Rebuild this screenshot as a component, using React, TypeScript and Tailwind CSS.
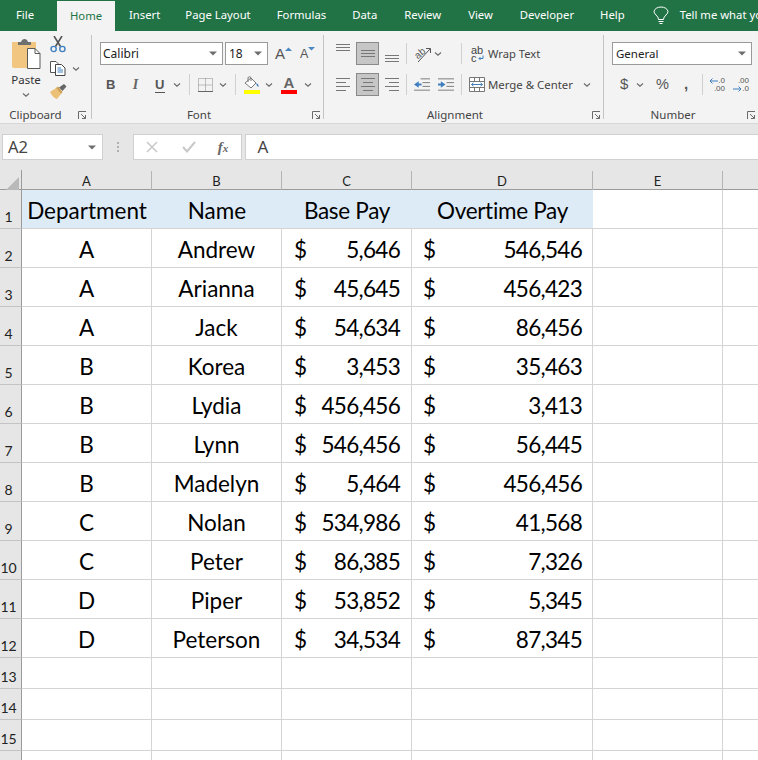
import React from "react";

const UI = "font-['Noto_Sans',sans-serif]";
const CELL = "font-['Lato',sans-serif]";

function Chev({ w = 12, c = "#6a6a6a" }: { w?: number; c?: string }) {
  return (
    <svg width={w} height="6" viewBox={`0 0 ${w} 6`} className="shrink-0">
      <path d={`M${w / 2 - 3} 1.5 L${w / 2} 4.2 L${w / 2 + 3} 1.5`} fill="none" stroke={c} strokeWidth="1.1" />
    </svg>
  );
}
function Tri() {
  return (
    <svg width="8" height="5" viewBox="0 0 8 5" className="shrink-0">
      <path d="M0 0.5H8L4 4.5Z" fill="#6e6e6e" />
    </svg>
  );
}
function Launcher() {
  return (
    <svg width="9" height="9" viewBox="0 0 9 9" className="shrink-0">
      <path d="M0.5 8V0.5H8M3 3L7.5 7.5M7.5 4V7.5H4" fill="none" stroke="#6a6a6a" strokeWidth="1" />
    </svg>
  );
}
function VSep() {
  return <div className="w-px h-[21px] bg-[#d0d0d0] shrink-0" />;
}
function GroupSep() {
  return <div className="w-px h-[84px] mt-[4px] bg-[#c4c4c4] shrink-0" />;
}
function GroupLabel({ text, pr, launcherGap }: { text: string; pr: number; launcherGap: number }) {
  return (
    <div className="mt-auto mb-[1px] h-[14px] flex items-center text-[11.5px] leading-[14px] text-[#444]">
      <span className="flex-1 text-center" style={{ paddingRight: pr }}>{text}</span>
      <span style={{ marginRight: launcherGap }} className="flex"><Launcher /></span>
    </div>
  );
}
function Lines({ kind }: { kind: "l" | "c" | "r" }) {
  const rows: [number, number][] =
    kind === "l" ? [[0, 14], [0, 10], [0, 14], [0, 10]] :
    kind === "c" ? [[0, 14], [2, 12], [0, 14], [2, 12]] :
    [[0, 14], [4, 14], [0, 14], [4, 14]];
  return (
    <svg width="14" height="13" viewBox="0 0 14 13" className="shrink-0">
      {rows.map(([a, b], i) => (
        <rect key={i} x={a} y={i * 4} width={b - a} height="1" fill="#777" />
      ))}
    </svg>
  );
}
function ThreeLines() {
  return (
    <svg width="14" height="7" viewBox="0 0 14 7" className="shrink-0">
      <rect width="14" height="1" fill="#777" />
      <rect y="3" width="14" height="1" fill="#777" />
      <rect y="6" width="14" height="1" fill="#777" />
    </svg>
  );
}
function Active({ children }: { children: React.ReactNode }) {
  return (
    <div className="w-[23px] h-[23px] bg-[#c6c6c6] border border-[#8a8a8a] flex items-center justify-center shrink-0">
      {children}
    </div>
  );
}

function ClipboardGroup() {
  return (
    <div className="w-[91px] h-full flex flex-col shrink-0 pt-[5px]">
      <div className="flex">
        <div className="w-[50px] flex flex-col items-center pl-[2px] pt-[3px]">
          <svg width="29" height="30" viewBox="0 0 29 30">
            <path d="M0 3H24V29H2Q0 29 0 27Z" fill="#f0c680" />
            <path d="M6 3H9Q10 0 12.500 0Q15 0 16 3H19V6H6Z" fill="#6f6f6f" />
            <path d="M15.500 9.500H23L28 14.500V29.500H15.500Z" fill="#fff" stroke="#5a5a5a" />
            <path d="M23 9.500V14.500H28" fill="none" stroke="#5a5a5a" />
          </svg>
          <span className="text-[11.5px] leading-[16px] mt-[3px] text-[#333]">Paste</span>
          <span className="mt-[4px] flex"><Chev w={10} /></span>
        </div>
        <div className="flex flex-col">
          <svg width="16" height="17" viewBox="0 0 16 17">
            <path d="M4 0L10.500 10.500M12 0L5.500 10.500" stroke="#555" strokeWidth="1.600" fill="none" />
            <circle cx="3.600" cy="13" r="2.600" fill="none" stroke="#3f7fbf" strokeWidth="1.400" />
            <circle cx="12.400" cy="13" r="2.600" fill="none" stroke="#3f7fbf" strokeWidth="1.400" />
          </svg>
          <div className="flex items-center mt-[8px] h-[15px]">
            <svg width="16" height="15" viewBox="0 0 16 15">
              <path d="M0.500 0.500H6L8 2.500V11.500H0.500Z" fill="#fff" stroke="#555" />
              <path d="M5.500 3.500H11.500L15 7V14.500H5.500Z" fill="#fff" stroke="#444" />
              <path d="M7.500 7H11M7.500 9H13M7.500 11H13" stroke="#3f7fbf" />
            </svg>
            <span className="ml-[6px] flex"><Chev w={8} /></span>
          </div>
          <svg width="17" height="15" viewBox="0 0 17 15" className="mt-[8px]">
            <path d="M0 8L6 4L11 10L7 15Q3 14 0 8Z" fill="#edc078" />
            <path d="M6 4L8 2.500L12.500 8L11 10Z" fill="#cfa050" />
            <path d="M9 3.500L14 0L16.500 2.500L12.500 7Z" fill="#666" />
          </svg>
        </div>
      </div>
      <GroupLabel text="Clipboard" pr={7} launcherGap={4} />
    </div>
  );
}

function FontGroup() {
  return (
    <div className="w-[231px] h-full flex flex-col shrink-0 pt-[11px]">
      <div className="flex items-center h-[23px] pl-[8px]">
        <div className="w-[123px] h-[23px] bg-white border border-[#9a9a9a] flex items-center justify-between pl-[2px] pr-[5px] text-[12px] text-[#222]">
          <span>Calibri</span><Tri />
        </div>
        <div className="w-[43px] h-[23px] ml-[2px] bg-white border border-[#9a9a9a] flex items-center justify-between pl-[3px] pr-[5px] text-[12px] text-[#222]">
          <span>18</span><Tri />
        </div>
        <div className="ml-[7px] w-[18px] h-[20px] flex items-start">
          <span className="text-[15px] leading-[20px] text-[#555] font-['Liberation_Sans',sans-serif]">A</span>
          <svg width="7" height="4" viewBox="0 0 7 4" className="mt-[3px]"><path d="M0 4L3.500 0.500L7 4Z" fill="#4a86c0" /></svg>
        </div>
        <div className="ml-[7px] w-[16px] h-[20px] flex items-start">
          <span className="text-[12.5px] leading-[21px] text-[#555] font-['Liberation_Sans',sans-serif]">A</span>
          <svg width="7" height="4" viewBox="0 0 7 4" className="mt-[3px]"><path d="M0 0H7L3.500 3.500Z" fill="#4a86c0" /></svg>
        </div>
      </div>
      <div className="flex items-center h-[23px] mt-[8px]">
        <span className="w-[9px] ml-[14px] text-[13px] font-bold text-[#555] font-['Liberation_Sans',sans-serif]">B</span>
        <span className="w-[9px] ml-[16px] text-[14px] text-center italic font-bold text-[#666] font-['Liberation_Serif',serif]">I</span>
        <span className="w-[10px] ml-[15px] text-[13px] leading-[15px] font-bold text-[#555] font-['Liberation_Sans',sans-serif] border-b border-[#555]">U</span>
        <span className="ml-[8px] flex"><Chev w={8} /></span>
        <span className="ml-[8px]"><VSep /></span>
        <svg width="15" height="14" viewBox="0 0 15 14" className="ml-[8px]">
          <path d="M0.500 0.500H14.500V13.500H0.500ZM7.500 0.500V13.500M0.500 7H14.500" fill="none" stroke="#888" strokeDasharray="1 1" />
          <path d="M0 13.500H15" stroke="#666" />
        </svg>
        <span className="ml-[6px] flex"><Chev w={8} /></span>
        <span className="ml-[8px]"><VSep /></span>
        <div className="ml-[7px] flex flex-col items-center w-[17px]">
          <svg width="17" height="14" viewBox="0 0 17 14">
            <path d="M2 7L8 2L13 7L8 12Z" fill="#fff" stroke="#777" />
            <path d="M5 6L5 1.500Q6.500 0 8 1.500L8 5" fill="none" stroke="#777" />
            <path d="M13 7Q16 8 15.500 11Q13.500 10 13 7Z" fill="#3f7fbf" />
          </svg>
          <div className="w-[16px] h-[4px] bg-[#ffff00]" />
        </div>
        <span className="ml-[5px] flex"><Chev w={8} /></span>
        <div className="ml-[8px] flex flex-col items-center w-[16px]">
          <span className="text-[15px] leading-[14px] font-bold text-[#666] font-['Liberation_Sans',sans-serif]">A</span>
          <div className="w-[16px] h-[4px] bg-[#ff0000]" />
        </div>
        <span className="ml-[7px] flex"><Chev w={8} /></span>
      </div>
      <GroupLabel text="Font" pr={6} launcherGap={2} />
    </div>
  );
}

function AlignmentGroup() {
  return (
    <div className="w-[279px] h-full flex flex-col shrink-0 pt-[11px]">
      <div className="flex items-center h-[23px] pl-[12px]">
        <div className="w-[14px] h-[23px] pt-[2px]"><ThreeLines /></div>
        <div className="ml-[6px]"><Active><ThreeLines /></Active></div>
        <div className="w-[14px] ml-[6px] h-[23px] pt-[13px]"><ThreeLines /></div>
        <span className="ml-[7px]"><VSep /></span>
        <svg width="17" height="18" viewBox="0 0 17 18" className="ml-[8px]">
          <text x="0" y="11" fontSize="10" fontFamily="Liberation Sans" fill="#555" transform="rotate(-40 6 9)">ab</text>
          <path d="M3 17L15 4M11 3.500L15.500 3.500L15.500 8" fill="none" stroke="#555" strokeWidth="1" />
        </svg>
        <span className="ml-[2px] flex"><Chev w={8} /></span>
        <span className="ml-[19px]"><VSep /></span>
        <div className="ml-[9px] w-[14px] flex flex-col text-[11px] leading-[8px] text-[#444] font-['Liberation_Sans',sans-serif]">
          <span>ab</span>
          <span className="flex items-center">c<svg width="6" height="6" viewBox="0 0 6 6" className="ml-[1px]"><path d="M5 0.500V3.500H1M2.500 2L1 3.500L2.500 5" fill="none" stroke="#3f7fbf" /></svg></span>
        </div>
        <span className="ml-[3px] mt-[1px] text-[11.2px] text-[#444] whitespace-nowrap">Wrap Text</span>
      </div>
      <div className="flex items-center h-[23px] mt-[8px] pl-[12px]">
        <Lines kind="l" />
        <div className="ml-[6px]"><Active><Lines kind="c" /></Active></div>
        <div className="ml-[6px]"><Lines kind="r" /></div>
        <span className="ml-[7px]"><VSep /></span>
        <svg width="16" height="13" viewBox="0 0 17 13" className="ml-[7px]">
          <path d="M7 0.500H17M9 4.500H17M9 8.500H17M0 12.500H17" stroke="#777" />
          <path d="M0 6.500L5 3V5.500H8V7.500H5V10Z" fill="#3f7fbf" />
        </svg>
        <svg width="16" height="13" viewBox="0 0 17 13" className="ml-[8px]">
          <path d="M0 0.500H17M9 4.500H17M9 8.500H17M0 12.500H17" stroke="#777" />
          <path d="M8 6.500L3 3V5.500H0V7.500H3V10Z" fill="#3f7fbf" />
        </svg>
        <span className="ml-[7px]"><VSep /></span>
        <svg width="16" height="15" viewBox="0 0 16 15" className="ml-[7px]">
          <path d="M0.500 0.500H15.500V14.500H0.500ZM0.500 4.500H15.500M0.500 10.500H15.500M5.500 0.500V4.500M10.500 0.500V4.500M5.500 10.500V14.500M10.500 10.500V14.500" fill="#fff" stroke="#777" />
          <path d="M2.500 7.500H13.500M4.500 5.800L2.500 7.500L4.500 9.200M11.500 5.800L13.500 7.500L11.500 9.200" fill="none" stroke="#3f7fbf" />
        </svg>
        <span className="ml-[3px] text-[11.4px] text-[#444] whitespace-nowrap w-[95px]">Merge &amp; Center</span>
        <Chev w={8} />
      </div>
      <GroupLabel text="Alignment" pr={6} launcherGap={2} />
    </div>
  );
}

function NumberGroup() {
  return (
    <div className="w-[154px] h-full flex flex-col shrink-0 pt-[11px]">
      <div className="flex items-center h-[23px] pl-[8px]">
        <div className="w-[140px] h-[23px] bg-white border border-[#9a9a9a] flex items-center justify-between pl-[3px] pr-[5px] text-[11.500px] text-[#222]">
          <span>General</span><Tri />
        </div>
      </div>
      <div className="flex items-center h-[23px] mt-[8px] text-[#555]">
        <span className="ml-[16px] w-[10px] text-[15px] font-['Liberation_Sans',sans-serif]">$</span>
        <span className="ml-[6px] flex"><Chev w={8} /></span>
        <span className="ml-[12px] w-[15px] text-[14.500px] font-['Liberation_Sans',sans-serif]">%</span>
        <span className="ml-[13px] w-[5px] text-[15px] font-bold font-['Liberation_Sans',sans-serif]">,</span>
        <span className="ml-[13px]"><VSep /></span>
        <div className="ml-[6px] w-[16px] flex flex-col items-end text-[8px] leading-[8px] font-['Liberation_Sans',sans-serif]">
          <span className="flex items-center"><svg width="9" height="6" viewBox="0 0 9 6"><path d="M9 3H1M3.500 0.500L1 3L3.500 5.500" fill="none" stroke="#3f7fbf" /></svg>.0</span>
          <span>.00</span>
        </div>
        <div className="ml-[8px] w-[16px] flex flex-col items-end text-[8px] leading-[8px] font-['Liberation_Sans',sans-serif]">
          <span>.00</span>
          <span className="flex items-center"><svg width="9" height="6" viewBox="0 0 9 6"><path d="M0 3H8M5.500 0.500L8 3L5.500 5.500" fill="none" stroke="#3f7fbf" /></svg>.0</span>
        </div>
      </div>
      <GroupLabel text="Number" pr={5} launcherGap={2} />
    </div>
  );
}

const tabs: [string, number][] = [
  ["Insert", 14], ["Page Layout", 25], ["Formulas", 26], ["Data", 26],
  ["Review", 27], ["View", 27], ["Developer", 27], ["Help", 26],
];

const rows: [string, string, string, string][] = [
  ["A", "Andrew", "5,646", "546,546"],
  ["A", "Arianna", "45,645", "456,423"],
  ["A", "Jack", "54,634", "86,456"],
  ["B", "Korea", "3,453", "35,463"],
  ["B", "Lydia", "456,456", "3,413"],
  ["B", "Lynn", "546,456", "56,445"],
  ["B", "Madelyn", "5,464", "456,456"],
  ["C", "Nolan", "534,986", "41,568"],
  ["C", "Peter", "86,385", "7,326"],
  ["D", "Piper", "53,852", "5,345"],
  ["D", "Peterson", "34,534", "87,345"],
];

const gridCols = "grid grid-cols-[22px_130px_130px_130px_181px_130px_35px]";
const line = "border-r border-b border-[#d4d4d4]";
const txt = `${CELL} text-[22.500px] leading-[28px] text-black`;
const head = `h-[39px] bg-[#ddebf7] border-b border-[#d4d4d4] flex items-end justify-center pb-[3px] ${txt}`;

function RowHead({ n, h }: { n: number; h: string }) {
  return (
    <div className={`${h} bg-[#e6e6e6] border-r border-r-[#9b9b9b] border-b border-b-[#c4c4c4] flex items-end pr-[4px] pb-[3px]`}>
      <span className={`${CELL} w-full text-center text-[14px] leading-[16px] text-[#222]`}>{n}</span>
    </div>
  );
}

export default function App() {
  return (
    <div className={`w-[758px] h-[760px] overflow-hidden bg-white ${UI}`}>
      {/* Tab bar */}
      <div className="h-[31px] bg-[#217346] flex items-end text-[11.3px] text-white whitespace-nowrap overflow-hidden">
        <div className="ml-[16px] w-[18px] shrink-0 h-full flex items-center">File</div>
        <div className="ml-[23px] w-[58px] shrink-0 h-[30px] bg-[#f3f3f3] text-[#217346] flex items-center justify-center">Home</div>
        {tabs.map(([t, m]) => (
          <div key={t} className="h-full shrink-0 flex items-center" style={{ marginLeft: m }}>{t}</div>
        ))}
        <div className="h-full shrink-0 flex items-center ml-[28px]">
          <svg width="16" height="19" viewBox="0 0 16 19">
            <path d="M5.500 13.500Q5.500 11 3 9Q1 7 1 5.500A7 5 0 0 1 8 1A7 5 0 0 1 15 5.500Q15 7 13 9Q10.500 11 10.500 13.500Z" fill="none" stroke="#fff" />
            <path d="M5.500 15.500H10.500M6.500 17.500H9.500" stroke="#fff" />
          </svg>
        </div>
        <div className="h-full shrink-0 flex items-center ml-[11px]">Tell me what you want to do</div>
      </div>

      {/* Ribbon */}
      <div className="h-[93px] bg-[#f3f3f3] border-b border-[#d6d6d6] flex text-[#333]">
        <ClipboardGroup />
        <GroupSep />
        <FontGroup />
        <GroupSep />
        <AlignmentGroup />
        <GroupSep />
        <NumberGroup />
      </div>

      {/* Formula bar */}
      <div className="h-[46px] bg-[#e6e6e6] flex items-start pt-[10px] pl-[2px]">
        <div className="w-[101px] h-[26px] bg-white border border-[#d0d0d0] flex items-center justify-between pl-[5px] pr-[6px]">
          <span className="text-[16.500px] text-[#444]">A2</span><Tri />
        </div>
        <div className="w-[30px] h-[26px] flex flex-col items-center justify-center gap-[2px]">
          <div className="w-[2px] h-[2px] bg-[#b0b0b0]" />
          <div className="w-[2px] h-[2px] bg-[#b0b0b0]" />
          <div className="w-[2px] h-[2px] bg-[#b0b0b0]" />
        </div>
        <div className="w-[110px] h-[26px] bg-white border border-[#d0d0d0] flex items-center">
          <svg width="12" height="12" viewBox="0 0 12 12" className="ml-[12px]">
            <path d="M1 1L11 11M11 1L1 11" stroke="#c8c8c8" strokeWidth="1.500" />
          </svg>
          <svg width="14" height="12" viewBox="0 0 14 12" className="ml-[24px]">
            <path d="M1 6L5 10.500L13 1" fill="none" stroke="#c8c8c8" strokeWidth="2" />
          </svg>
          <span className="ml-[22px] text-[15px] leading-[18px] italic font-bold font-['Liberation_Serif',serif] text-[#666]">f<span className="text-[11px]">x</span></span>
        </div>
        <div className="ml-[3px] w-[514px] h-[26px] bg-white border border-[#d0d0d0] border-r-0 flex items-center pl-[11px] text-[17px] text-[#444]">
          A
        </div>
      </div>

      {/* Column headings */}
      <div className={`${gridCols} h-[20px] bg-[#e6e6e6] border-b border-[#9b9b9b]`}>
        <div className="border-r border-[#9b9b9b] flex items-end justify-start pl-[6px] pb-[2px]">
          <svg width="13" height="13" viewBox="0 0 13 13"><path d="M13 0V13H0Z" fill="#b9b9b9" /></svg>
        </div>
        {["A", "B", "C", "D", "E", ""].map((c, i) => (
          <div key={i} className={`flex items-center justify-center pt-[1px] mt-[1px] ${c ? "border-r border-[#b4b4b4]" : ""} ${CELL} text-[13px] text-[#222]`}>{c}</div>
        ))}
      </div>

      {/* Sheet */}
      <div className={gridCols}>
        <RowHead n={1} h="h-[39px]" />
        <div className={head}>Department</div>
        <div className={head}>Name</div>
        <div className={`${head} tracking-[-0.3px]`}>Base Pay</div>
        <div className={`${head} tracking-[-0.3px]`}>Overtime Pay</div>
        <div className={`h-[39px] ${line}`} />
        <div className="h-[39px] border-b border-[#d4d4d4]" />
        {rows.map((r, i) => (
          <React.Fragment key={i}>
            <RowHead n={i + 2} h="h-[39px]" />
            <div className={`h-[39px] ${line} flex items-end justify-center pb-[3px] ${txt}`}>{r[0]}</div>
            <div className={`h-[39px] ${line} flex items-end justify-center pb-[3px] ${txt}`}>{r[1]}</div>
            <div className={`h-[39px] ${line} flex items-end justify-between pb-[3px] pl-[12px] pr-[11px] ${txt}`}><span>$</span><span className="tracking-[-0.7px]">{r[2]}</span></div>
            <div className={`h-[39px] ${line} flex items-end justify-between pb-[3px] pl-[11px] pr-[10px] ${txt}`}><span>$</span><span className="tracking-[-0.7px]">{r[3]}</span></div>
            <div className={`h-[39px] ${line}`} />
            <div className="h-[39px] border-b border-[#d4d4d4]" />
          </React.Fragment>
        ))}
        {[13, 14, 15].map((n) => (
          <React.Fragment key={n}>
            <RowHead n={n} h="h-[31px]" />
            {[0, 1, 2, 3, 4].map((k) => <div key={k} className={`h-[31px] ${line}`} />)}
            <div className="h-[31px] border-b border-[#d4d4d4]" />
          </React.Fragment>
        ))}
        <div className="h-[31px] bg-[#e6e6e6] border-r border-[#9b9b9b]" />
        {[0, 1, 2, 3, 4].map((k) => <div key={k} className="h-[31px] border-r border-[#d4d4d4]" />)}
        <div className="h-[31px]" />
      </div>
    </div>
  );
}
